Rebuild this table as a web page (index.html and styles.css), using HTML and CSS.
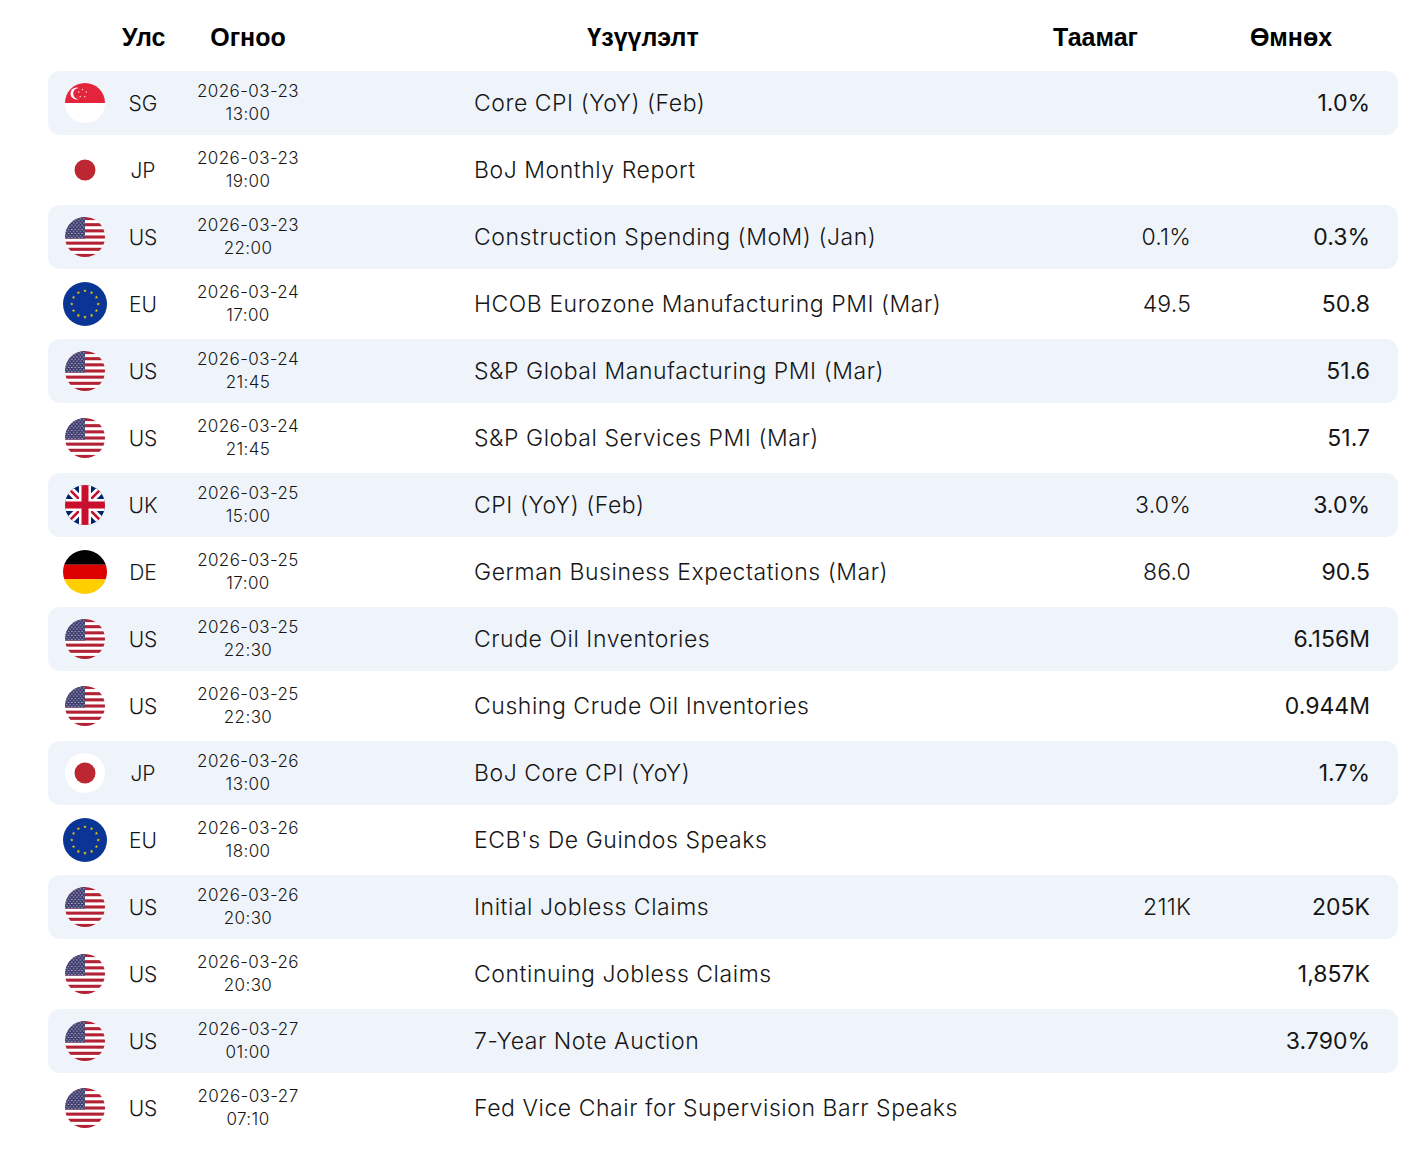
FILE: index.html
```html
<!DOCTYPE html>
<html lang="mn">
<head>
<meta charset="utf-8">
<title>Эдийн засгийн календарь</title>
<link rel="stylesheet" href="styles.css">
</head>
<body>
<svg class="defs" width="0" height="0" aria-hidden="true">
  <defs>
    <path id="star" d="M0,-1 L0.2245,-0.309 L0.951,-0.309 L0.363,0.118 L0.588,0.809 L0,0.382 L-0.588,0.809 L-0.363,0.118 L-0.951,-0.309 L-0.2245,-0.309Z"/>
    <pattern id="usstars" x="1" y="1" width="3.4" height="4.2" patternUnits="userSpaceOnUse">
      <circle cx="0.8" cy="0.8" r="0.55" fill="#fff"/>
      <circle cx="2.5" cy="2.9" r="0.55" fill="#fff"/>
    </pattern>
    <symbol id="f-us" viewBox="0 0 40 40">
      <rect width="40" height="40" fill="#fff"/>
      <rect y="0" width="40" height="3.08" fill="#b22234"/>
      <rect y="6.15" width="40" height="3.08" fill="#b22234"/>
      <rect y="12.3" width="40" height="3.08" fill="#b22234"/>
      <rect y="18.46" width="40" height="3.08" fill="#b22234"/>
      <rect y="24.6" width="40" height="3.08" fill="#b22234"/>
      <rect y="30.77" width="40" height="3.08" fill="#b22234"/>
      <rect y="36.92" width="40" height="3.08" fill="#b22234"/>
      <rect width="20" height="21.54" fill="#3c3b6e"/>
      <rect width="20" height="21.54" fill="url(#usstars)"/>
    </symbol>
    <symbol id="f-sg" viewBox="0 0 40 40">
      <rect width="40" height="40" fill="#fff"/>
      <rect width="40" height="20" fill="#e3243b"/>
      <circle cx="11.5" cy="10.5" r="6" fill="#fff"/>
      <circle cx="13.8" cy="10.5" r="5.6" fill="#e3243b"/>
      <use href="#star" transform="translate(17.5,6.6) scale(1.1)" fill="#fff"/>
      <use href="#star" transform="translate(21.2,9.2) scale(1.1)" fill="#fff"/>
      <use href="#star" transform="translate(19.8,13.6) scale(1.1)" fill="#fff"/>
      <use href="#star" transform="translate(15.2,13.6) scale(1.1)" fill="#fff"/>
      <use href="#star" transform="translate(13.8,9.2) scale(1.1)" fill="#fff"/>
    </symbol>
    <symbol id="f-jp" viewBox="0 0 40 40">
      <rect width="40" height="40" fill="#fff"/>
      <circle cx="20" cy="20" r="10.5" fill="#bc2732"/>
    </symbol>
    <symbol id="f-eu" viewBox="0 0 40 40">
      <rect width="40" height="40" fill="#0b3594"/>
      <g fill="#ffcc00">
        <use href="#star" transform="translate(20,8) scale(1.7)"/>
        <use href="#star" transform="translate(26,9.6) scale(1.7)"/>
        <use href="#star" transform="translate(30.4,14) scale(1.7)"/>
        <use href="#star" transform="translate(32,20) scale(1.7)"/>
        <use href="#star" transform="translate(30.4,26) scale(1.7)"/>
        <use href="#star" transform="translate(26,30.4) scale(1.7)"/>
        <use href="#star" transform="translate(20,32) scale(1.7)"/>
        <use href="#star" transform="translate(14,30.4) scale(1.7)"/>
        <use href="#star" transform="translate(9.6,26) scale(1.7)"/>
        <use href="#star" transform="translate(8,20) scale(1.7)"/>
        <use href="#star" transform="translate(9.6,14) scale(1.7)"/>
        <use href="#star" transform="translate(14,9.6) scale(1.7)"/>
      </g>
    </symbol>
    <symbol id="f-uk" viewBox="0 0 40 40">
      <rect width="40" height="40" fill="#012169"/>
      <path d="M0,0 L40,40 M40,0 L0,40" stroke="#fff" stroke-width="8"/>
      <path d="M0,0 L40,40 M40,0 L0,40" stroke="#c8102e" stroke-width="2.6"/>
      <path d="M20,0 V40 M0,20 H40" stroke="#fff" stroke-width="12"/>
      <path d="M20,0 V40 M0,20 H40" stroke="#c8102e" stroke-width="7"/>
    </symbol>
    <symbol id="f-de" viewBox="0 0 40 40">
      <rect width="40" height="13.4" fill="#000"/>
      <rect y="13.3" width="40" height="13.4" fill="#dd0000"/>
      <rect y="26.6" width="40" height="13.4" fill="#ffce00"/>
    </symbol>
  </defs>
</svg>

<div class="calendar">
  <div class="head">
    <div class="h-flag"></div>
    <div class="h-cell">Улс</div>
    <div class="h-cell">Огноо</div>
    <div class="h-cell h-event">Үзүүлэлт</div>
    <div class="h-cell">Таамаг</div>
    <div class="h-cell h-prev">Өмнөх</div>
  </div>

  <div class="row alt">
    <div class="c-flag"><svg class="flag"><use href="#f-sg"/></svg></div>
    <div class="c-code">SG</div>
    <div class="c-date">2026-03-23<br>13:00</div>
    <div class="c-event">Core CPI (YoY) (Feb)</div>
    <div class="c-fc"></div>
    <div class="c-prev">1.0%</div>
  </div>
  <div class="row">
    <div class="c-flag"><svg class="flag"><use href="#f-jp"/></svg></div>
    <div class="c-code">JP</div>
    <div class="c-date">2026-03-23<br>19:00</div>
    <div class="c-event">BoJ Monthly Report</div>
    <div class="c-fc"></div>
    <div class="c-prev"></div>
  </div>
  <div class="row alt">
    <div class="c-flag"><svg class="flag"><use href="#f-us"/></svg></div>
    <div class="c-code">US</div>
    <div class="c-date">2026-03-23<br>22:00</div>
    <div class="c-event">Construction Spending (MoM) (Jan)</div>
    <div class="c-fc">0.1%</div>
    <div class="c-prev">0.3%</div>
  </div>
  <div class="row">
    <div class="c-flag"><svg class="flag flag-eu"><use href="#f-eu"/></svg></div>
    <div class="c-code">EU</div>
    <div class="c-date">2026-03-24<br>17:00</div>
    <div class="c-event">HCOB Eurozone Manufacturing PMI (Mar)</div>
    <div class="c-fc">49.5</div>
    <div class="c-prev">50.8</div>
  </div>
  <div class="row alt">
    <div class="c-flag"><svg class="flag"><use href="#f-us"/></svg></div>
    <div class="c-code">US</div>
    <div class="c-date">2026-03-24<br>21:45</div>
    <div class="c-event">S&amp;P Global Manufacturing PMI (Mar)</div>
    <div class="c-fc"></div>
    <div class="c-prev">51.6</div>
  </div>
  <div class="row">
    <div class="c-flag"><svg class="flag"><use href="#f-us"/></svg></div>
    <div class="c-code">US</div>
    <div class="c-date">2026-03-24<br>21:45</div>
    <div class="c-event">S&amp;P Global Services PMI (Mar)</div>
    <div class="c-fc"></div>
    <div class="c-prev">51.7</div>
  </div>
  <div class="row alt">
    <div class="c-flag"><svg class="flag"><use href="#f-uk"/></svg></div>
    <div class="c-code">UK</div>
    <div class="c-date">2026-03-25<br>15:00</div>
    <div class="c-event">CPI (YoY) (Feb)</div>
    <div class="c-fc">3.0%</div>
    <div class="c-prev">3.0%</div>
  </div>
  <div class="row">
    <div class="c-flag"><svg class="flag flag-de"><use href="#f-de"/></svg></div>
    <div class="c-code">DE</div>
    <div class="c-date">2026-03-25<br>17:00</div>
    <div class="c-event">German Business Expectations (Mar)</div>
    <div class="c-fc">86.0</div>
    <div class="c-prev">90.5</div>
  </div>
  <div class="row alt">
    <div class="c-flag"><svg class="flag"><use href="#f-us"/></svg></div>
    <div class="c-code">US</div>
    <div class="c-date">2026-03-25<br>22:30</div>
    <div class="c-event">Crude Oil Inventories</div>
    <div class="c-fc"></div>
    <div class="c-prev">6.156M</div>
  </div>
  <div class="row">
    <div class="c-flag"><svg class="flag"><use href="#f-us"/></svg></div>
    <div class="c-code">US</div>
    <div class="c-date">2026-03-25<br>22:30</div>
    <div class="c-event">Cushing Crude Oil Inventories</div>
    <div class="c-fc"></div>
    <div class="c-prev">0.944M</div>
  </div>
  <div class="row alt">
    <div class="c-flag"><svg class="flag"><use href="#f-jp"/></svg></div>
    <div class="c-code">JP</div>
    <div class="c-date">2026-03-26<br>13:00</div>
    <div class="c-event">BoJ Core CPI (YoY)</div>
    <div class="c-fc"></div>
    <div class="c-prev">1.7%</div>
  </div>
  <div class="row">
    <div class="c-flag"><svg class="flag flag-eu"><use href="#f-eu"/></svg></div>
    <div class="c-code">EU</div>
    <div class="c-date">2026-03-26<br>18:00</div>
    <div class="c-event">ECB's De Guindos Speaks</div>
    <div class="c-fc"></div>
    <div class="c-prev"></div>
  </div>
  <div class="row alt">
    <div class="c-flag"><svg class="flag"><use href="#f-us"/></svg></div>
    <div class="c-code">US</div>
    <div class="c-date">2026-03-26<br>20:30</div>
    <div class="c-event">Initial Jobless Claims</div>
    <div class="c-fc">211K</div>
    <div class="c-prev">205K</div>
  </div>
  <div class="row">
    <div class="c-flag"><svg class="flag"><use href="#f-us"/></svg></div>
    <div class="c-code">US</div>
    <div class="c-date">2026-03-26<br>20:30</div>
    <div class="c-event">Continuing Jobless Claims</div>
    <div class="c-fc"></div>
    <div class="c-prev">1,857K</div>
  </div>
  <div class="row alt">
    <div class="c-flag"><svg class="flag"><use href="#f-us"/></svg></div>
    <div class="c-code">US</div>
    <div class="c-date">2026-03-27<br>01:00</div>
    <div class="c-event">7-Year Note Auction</div>
    <div class="c-fc"></div>
    <div class="c-prev">3.790%</div>
  </div>
  <div class="row">
    <div class="c-flag"><svg class="flag"><use href="#f-us"/></svg></div>
    <div class="c-code">US</div>
    <div class="c-date">2026-03-27<br>07:10</div>
    <div class="c-event">Fed Vice Chair for Supervision Barr Speaks</div>
    <div class="c-fc"></div>
    <div class="c-prev"></div>
  </div>
</div>
</body>
</html>
```

FILE: styles.css
```css
html, body {
  margin: 0;
  padding: 0;
  background: #ffffff;
}

body {
  font-family: Inter, "Noto Sans", "DejaVu Sans", sans-serif;
  color: #161616;
}

.defs {
  display: block;
  width: 0;
  height: 0;
  overflow: hidden;
}

.calendar {
  width: 1350px;
  margin-left: 48px;
  display: flex;
  flex-direction: column;
  gap: 3px;
}

.head,
.row {
  display: grid;
  grid-template-columns: 74px 42px 168px 668px 191px 179px 28px;
  align-items: center;
}

.head {
  height: 68px;
  padding-top: 6px;
  box-sizing: border-box;
  font-family: "Liberation Sans", Arial, sans-serif;
  font-weight: 700;
  font-size: 25px;
  color: #000;
}

.h-cell {
  text-align: center;
  white-space: nowrap;
}

.h-event {
  padding-right: 46px;
}

.h-prev {
  grid-column: 6 / 8;
  padding-right: 7px;
}

.row {
  height: 64px;
  border-radius: 12px;
  font-weight: 300;
}

.row.alt {
  background: #eff4fb;
}

.c-flag {
  display: flex;
  justify-content: center;
  align-items: center;
}

.flag {
  width: 40px;
  height: 40px;
  border-radius: 50%;
  display: block;
}

.flag-eu,
.flag-de {
  width: 44px;
  height: 44px;
}

.c-code {
  text-align: center;
  font-size: 21px;
}

.c-date {
  text-align: center;
  font-size: 17px;
  letter-spacing: 0.4px;
  line-height: 23px;
  white-space: nowrap;
}

.c-event {
  padding-left: 142px;
  font-size: 23px;
  letter-spacing: 0.55px;
  white-space: nowrap;
}

.c-fc {
  text-align: right;
  font-size: 23px;
  letter-spacing: 0.2px;
}

.c-prev {
  text-align: right;
  font-size: 23px;
  letter-spacing: 0;
  font-weight: 400;
}
```
